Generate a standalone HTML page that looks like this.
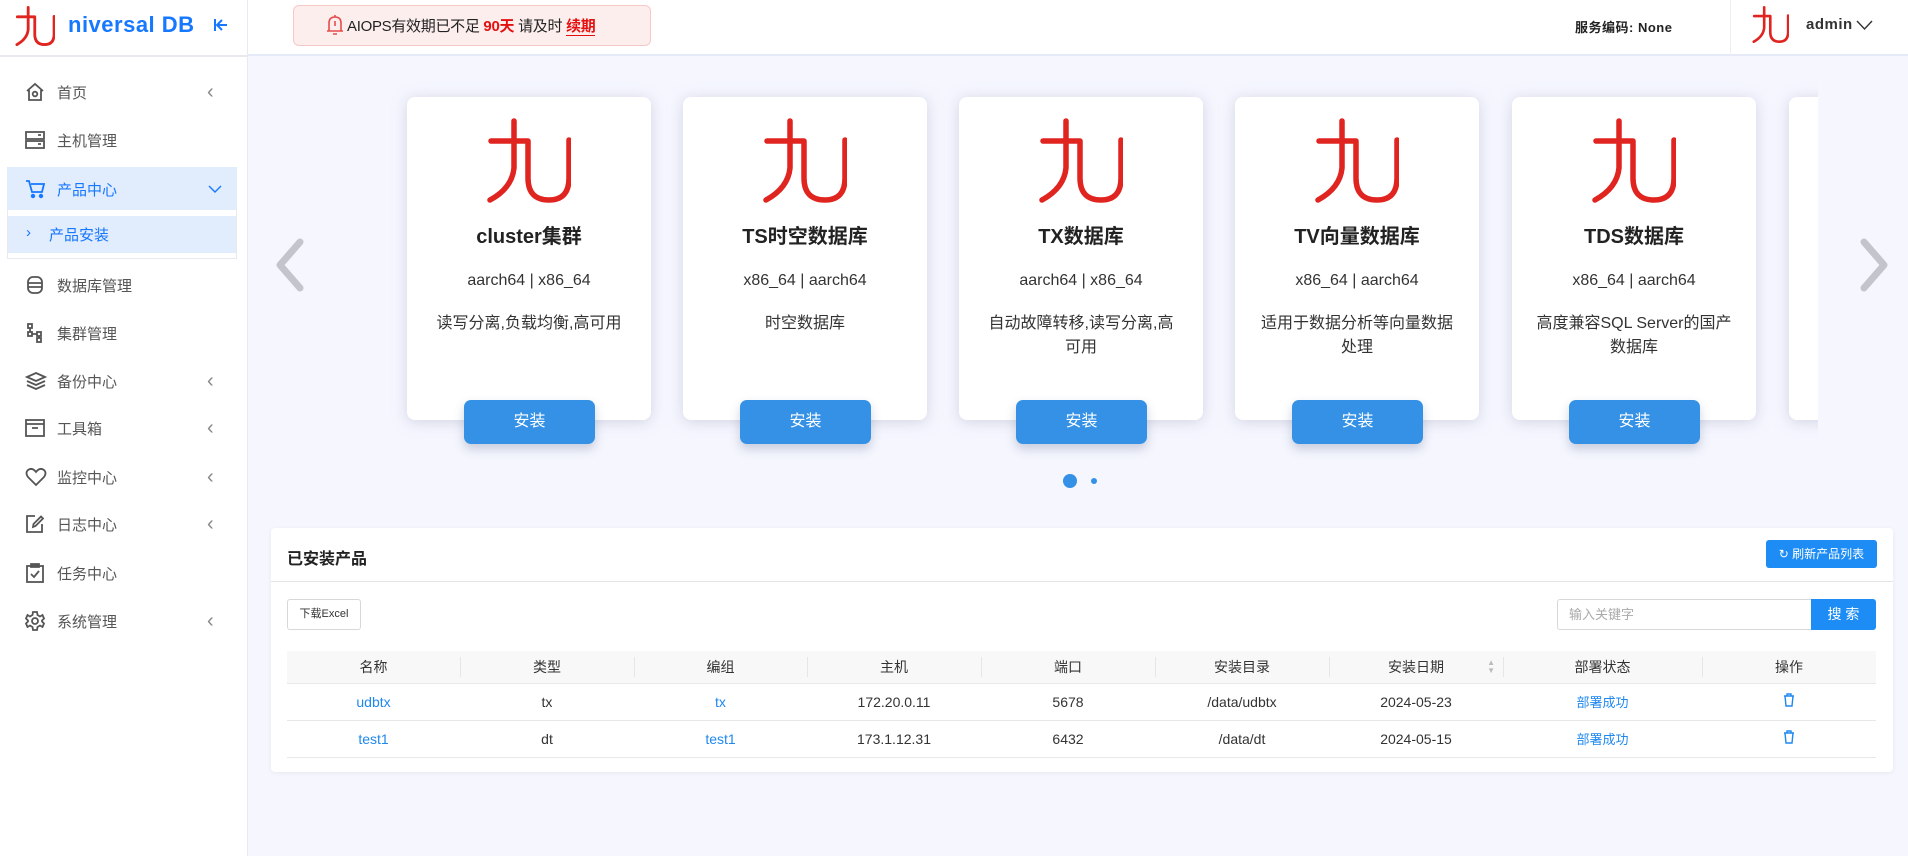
<!DOCTYPE html>
<html><head><meta charset="utf-8">
<style>
*{box-sizing:border-box;margin:0;padding:0}
body{width:1908px;height:856px;overflow:hidden;background:#f5f6fe;font-family:"Liberation Sans","Noto Sans CJK SC",sans-serif;color:#333;position:relative}
.abs{position:absolute}
#side{left:0;top:0;width:248px;height:856px;background:#fff;border-right:1px solid #e8eaf2}
#head{left:248px;top:0;width:1660px;height:56px;background:#fff;border-bottom:2px solid #e6e9f7}
.mi{position:absolute;left:0;width:248px;height:40px;display:flex;align-items:center;font-size:15px;color:#555}
.mi svg{position:absolute;left:25px}
.mi .t{position:absolute;left:57px}
.mi .ar{position:absolute;left:207px;font-size:20px;color:#888}
.card{position:absolute;top:97px;width:244px;height:323px;background:#fff;border-radius:8px;box-shadow:0 2px 14px rgba(180,184,205,.55);text-align:center}
.card .lg{position:absolute;left:79px;top:21px}
.card .tt{position:absolute;left:0;right:0;top:123px;font-size:20px;font-weight:bold;color:#222}
.card .ac{position:absolute;left:0;right:0;top:175px;font-size:16px;color:#333}
.card .ds{position:absolute;left:22px;right:22px;top:215px;font-size:16px;line-height:24px;color:#333}
.btn{position:absolute;top:303px;left:57px;width:131px;height:44px;background:#3491e6;border-radius:7px;color:#fff;font-size:16px;line-height:44px;box-shadow:0 5px 10px rgba(60,80,120,.25)}
table{border-collapse:collapse;position:absolute;left:287px;top:651px;width:1589px;font-size:14px}
th{height:32px;background:#f8f8f8;font-weight:normal;color:#333;position:relative}
td{height:37px;text-align:center;border-bottom:1px solid #e8e8e8;color:#333}
th{border-bottom:1px solid #e8e8e8}
th+th:before{content:"";position:absolute;left:0;top:6px;height:20px;border-left:1px solid #e6e6e6}
.bl{color:#1e88f0}
</style></head><body>

<div id="side" class="abs">
  <svg class="abs" style="left:15px;top:6px" width="40" height="40" viewBox="0 0 85 85"><g fill="none" stroke="#e02420" stroke-width="6" stroke-linecap="round"><path d="M28 3V50Q26 70 4 82M5 23H42M42 23V60Q42 82 63 82Q83 82 83 60V22"/></g></svg>
  <div class="abs" style="left:68px;top:12px;font-size:22px;font-weight:bold;color:#1677ff;letter-spacing:.5px">niversal DB</div>
  <svg class="abs" style="left:213px;top:17px" width="16" height="16" viewBox="0 0 16 16"><g stroke="#1677ff" stroke-width="2" fill="none"><path d="M2 2V14M14 8H5M9 3L4 8L9 13"/></g></svg>
  <div class="abs" style="left:0;top:55px;width:248px;border-top:2px solid #e8e8ee"></div>

  <div class="mi" style="top:72px"><svg width="20" height="20" viewBox="0 0 20 20"><g fill="none" stroke="#555" stroke-width="1.8"><path d="M2 9L10 2L18 9M4 8V18H16V8"/><circle cx="10" cy="12" r="2.3"/></g></svg><span class="t">首页</span><span class="ar">‹</span></div>
  <div class="mi" style="top:120px"><svg width="20" height="20" viewBox="0 0 20 20"><g fill="none" stroke="#555" stroke-width="1.8"><rect x="1" y="2" width="18" height="7"/><rect x="1" y="11" width="18" height="7"/><path d="M13 5H16M13 14H16"/></g></svg><span class="t">主机管理</span></div>
  <div class="abs" style="left:7px;top:167px;width:230px;height:43px;background:#e1ecfd"></div>
  <div class="mi" style="top:169px;color:#1677ff"><svg width="22" height="22" viewBox="0 0 22 22"><g fill="none" stroke="#1677ff" stroke-width="1.8"><path d="M1 3H4L7 14H17L19 6H6"/><circle cx="8" cy="18" r="1.3" fill="#1677ff"/><circle cx="16" cy="18" r="1.3" fill="#1677ff"/></g></svg><span class="t">产品中心</span><svg style="left:208px" width="14" height="10" viewBox="0 0 14 10"><path d="M1 2L7 8L13 2" stroke="#1677ff" fill="none" stroke-width="1.4"/></svg></div>
  <div class="abs" style="left:7px;top:210px;width:230px;height:49px;border:1px solid #e8e8ee;border-top:none"></div>
  <div class="abs" style="left:8px;top:216px;width:228px;height:37px;background:#e1ecfd"></div>
  <div class="abs" style="left:26px;top:224px;font-size:15px;color:#1677ff">›</div>
  <div class="abs" style="left:49px;top:224px;font-size:15px;color:#1677ff">产品安装</div>

  <div class="mi" style="top:265px"><svg width="20" height="20" viewBox="0 0 20 20"><g fill="none" stroke="#555" stroke-width="1.8"><rect x="3" y="2" width="14" height="16" rx="5"/><path d="M3 8H17M3 12H17"/></g></svg><span class="t">数据库管理</span></div>
  <div class="mi" style="top:313px"><svg width="20" height="20" viewBox="0 0 20 20"><g fill="none" stroke="#555" stroke-width="1.8"><rect x="3" y="1" width="4" height="4"/><rect x="3" y="9" width="4" height="4"/><rect x="12" y="15" width="4" height="4"/><rect x="12" y="9" width="4" height="4"/><path d="M5 5V9M7 11H12M14 13V15"/></g></svg><span class="t">集群管理</span></div>
  <div class="mi" style="top:361px"><svg width="22" height="20" viewBox="0 0 22 20"><g fill="none" stroke="#555" stroke-width="1.8"><path d="M11 2L20 6L11 10L2 6Z"/><path d="M2 10L11 14L20 10M2 14L11 18L20 14"/></g></svg><span class="t">备份中心</span><span class="ar">‹</span></div>
  <div class="mi" style="top:408px"><svg width="20" height="20" viewBox="0 0 20 20"><g fill="none" stroke="#555" stroke-width="1.8"><rect x="1" y="2" width="18" height="16"/><path d="M1 6H19M7 10H13"/></g></svg><span class="t">工具箱</span><span class="ar">‹</span></div>
  <div class="mi" style="top:457px"><svg width="22" height="20" viewBox="0 0 22 20"><path d="M11 18L3 10Q0 6 3 3Q7 0 11 5Q15 0 19 3Q22 6 19 10Z" fill="none" stroke="#555" stroke-width="1.8"/></svg><span class="t">监控中心</span><span class="ar">‹</span></div>
  <div class="mi" style="top:504px"><svg width="20" height="20" viewBox="0 0 20 20"><g fill="none" stroke="#555" stroke-width="1.8"><path d="M10 2H2V18H17V10"/><path d="M8 13L8.5 10L16 2.5L18 4.5L10.5 12Z"/></g></svg><span class="t">日志中心</span><span class="ar">‹</span></div>
  <div class="mi" style="top:553px"><svg width="20" height="20" viewBox="0 0 20 20"><g fill="none" stroke="#555" stroke-width="1.8"><rect x="2" y="3" width="16" height="16"/><path d="M6 1H14V4H6Z" fill="#555"/><path d="M6 11L9 14L14 8"/></g></svg><span class="t">任务中心</span></div>
  <div class="mi" style="top:601px"><svg width="20" height="20" viewBox="0 0 20 20"><g fill="none" stroke="#555" stroke-width="1.8"><path d="M8 1H12L12.5 4L15 5.5L17.5 4L19 7.5L17 9.5V10.5L19 12.5L17.5 16L15 14.5L12.5 16L12 19H8L7.5 16L5 14.5L2.5 16L1 12.5L3 10.5V9.5L1 7.5L2.5 4L5 5.5L7.5 4Z"/><circle cx="10" cy="10" r="3"/></g></svg><span class="t">系统管理</span><span class="ar">‹</span></div>
</div>

<div id="head" class="abs">
  <div class="abs" style="left:45px;top:5px;width:358px;height:41px;background:#fdeeee;border:1px solid #f8c8c8;border-radius:6px"></div>
  <svg class="abs" style="left:78px;top:14px" width="18" height="22" viewBox="0 0 18 22"><g fill="none" stroke="#e74c4c" stroke-width="1.6"><path d="M3 17V9Q3 3 9 3Q15 3 15 9V17ZM1 17H17M9 1V3M7 20H11M9 7V12"/></g></svg>
  <div class="abs" style="left:99px;top:15px;font-size:15px;color:#222;white-space:nowrap;letter-spacing:-.3px">AIOPS有效期已不足 <b style="color:#e41010">90天</b> 请及时 <b style="color:#e41010;border-bottom:1px solid #e41010">续期</b></div>
  <div class="abs" style="left:1327px;top:17px;font-size:13px;font-weight:bold;color:#222;letter-spacing:.5px">服务编码: None</div>
  <div class="abs" style="left:1482px;top:0;height:56px;border-left:1px solid #eee"></div>
  <svg class="abs" style="left:1504px;top:6px" width="37" height="37" viewBox="0 0 85 85"><g fill="none" stroke="#e02420" stroke-width="6" stroke-linecap="round"><path d="M28 3V50Q26 70 4 82M5 23H42M42 23V60Q42 82 63 82Q83 82 83 60V22"/></g></svg>
  <div class="abs" style="left:1558px;top:16px;font-size:15px;font-weight:bold;color:#333;letter-spacing:.5px">admin</div>
  <svg class="abs" style="left:1608px;top:20px" width="17" height="11" viewBox="0 0 17 11"><path d="M1 1L8.5 9L16 1" stroke="#333" fill="none" stroke-width="1.4"/></svg>
</div>

<div class="abs" style="left:270px;top:80px;width:1548px;height:390px;overflow:hidden">
  <div class="abs" style="left:0;top:0;width:1548px;height:390px">
    <div class="card" style="left:137px;top:17px"><svg class="lg" width="85" height="85" viewBox="0 0 85 85"><g fill="none" stroke="#e02420" stroke-width="5.5" stroke-linecap="round"><path d="M28 3V50Q26 70 4 82M5 23H42M42 23V60Q42 82 63 82Q83 82 83 60V22"/></g></svg><div class="tt">cluster集群</div><div class="ac">aarch64 | x86_64</div><div class="ds">读写分离,负载均衡,高可用</div><div class="btn">安装</div></div>
    <div class="card" style="left:413px;top:17px"><svg class="lg" width="85" height="85" viewBox="0 0 85 85"><g fill="none" stroke="#e02420" stroke-width="5.5" stroke-linecap="round"><path d="M28 3V50Q26 70 4 82M5 23H42M42 23V60Q42 82 63 82Q83 82 83 60V22"/></g></svg><div class="tt">TS时空数据库</div><div class="ac">x86_64 | aarch64</div><div class="ds">时空数据库</div><div class="btn">安装</div></div>
    <div class="card" style="left:689px;top:17px"><svg class="lg" width="85" height="85" viewBox="0 0 85 85"><g fill="none" stroke="#e02420" stroke-width="5.5" stroke-linecap="round"><path d="M28 3V50Q26 70 4 82M5 23H42M42 23V60Q42 82 63 82Q83 82 83 60V22"/></g></svg><div class="tt">TX数据库</div><div class="ac">aarch64 | x86_64</div><div class="ds">自动故障转移,读写分离,高可用</div><div class="btn">安装</div></div>
    <div class="card" style="left:965px;top:17px"><svg class="lg" width="85" height="85" viewBox="0 0 85 85"><g fill="none" stroke="#e02420" stroke-width="5.5" stroke-linecap="round"><path d="M28 3V50Q26 70 4 82M5 23H42M42 23V60Q42 82 63 82Q83 82 83 60V22"/></g></svg><div class="tt">TV向量数据库</div><div class="ac">x86_64 | aarch64</div><div class="ds">适用于数据分析等向量数据处理</div><div class="btn">安装</div></div>
    <div class="card" style="left:1242px;top:17px"><svg class="lg" width="85" height="85" viewBox="0 0 85 85"><g fill="none" stroke="#e02420" stroke-width="5.5" stroke-linecap="round"><path d="M28 3V50Q26 70 4 82M5 23H42M42 23V60Q42 82 63 82Q83 82 83 60V22"/></g></svg><div class="tt">TDS数据库</div><div class="ac">x86_64 | aarch64</div><div class="ds">高度兼容SQL Server的国产数据库</div><div class="btn">安装</div></div>
    <div class="card" style="left:1519px;top:17px"></div>
  </div>
</div>
<svg class="abs" style="left:274px;top:238px" width="32" height="54" viewBox="0 0 32 54"><path d="M26 4L6 27L26 50" stroke="#c4c4cc" stroke-width="7" fill="none" stroke-linecap="round" stroke-linejoin="round"/></svg>
<svg class="abs" style="left:1858px;top:238px" width="32" height="54" viewBox="0 0 32 54"><path d="M6 4L26 27L6 50" stroke="#c4c4cc" stroke-width="7" fill="none" stroke-linecap="round" stroke-linejoin="round"/></svg>
<div class="abs" style="left:1063px;top:474px;width:14px;height:14px;border-radius:50%;background:#3491e6"></div>
<div class="abs" style="left:1091px;top:478px;width:6px;height:6px;border-radius:50%;background:#3491e6"></div>

<div class="abs" style="left:271px;top:528px;width:1622px;height:244px;background:#fff;border-radius:4px;box-shadow:0 1px 4px rgba(0,0,0,.06)">
  <div class="abs" style="left:16px;top:17px;font-size:16px;font-weight:bold;color:#222">已安装产品</div>
  <div class="abs" style="left:0;top:53px;width:100%;border-top:1px solid #e4e4e4"></div>
  <div class="abs" style="left:1495px;top:12px;width:111px;height:28px;background:#1e8cf5;border-radius:3px;color:#fff;font-size:12px;line-height:28px;text-align:center">&#x21BB; 刷新产品列表</div>
  <div class="abs" style="left:16px;top:71px;width:74px;height:31px;border:1px solid #d8d8d8;border-radius:3px;font-size:11px;line-height:29px;text-align:center;color:#333">下载Excel</div>
  <div class="abs" style="left:1286px;top:71px;width:255px;height:31px;border:1px solid #d8d8d8;border-radius:3px 0 0 3px;font-size:13px;line-height:29px;padding-left:11px;color:#aaa">输入关键字</div>
  <div class="abs" style="left:1540px;top:71px;width:65px;height:31px;background:#1e8cf5;border-radius:0 3px 3px 0;font-size:14px;line-height:31px;text-align:center;color:#fff">搜 索</div>
</div>
<table>
<tr><th style="width:173px">名称</th><th style="width:174px">类型</th><th style="width:173px">编组</th><th style="width:174px">主机</th><th style="width:174px">端口</th><th style="width:174px">安装目录</th><th style="width:174px">安装日期<span style="position:absolute;right:8px;top:8px;font-size:8px;line-height:8px;color:#bbb">▲<br>▼</span></th><th style="width:199px">部署状态</th><th>操作</th></tr>
<tr><td class="bl">udbtx</td><td>tx</td><td class="bl">tx</td><td>172.20.0.11</td><td>5678</td><td>/data/udbtx</td><td>2024-05-23</td><td class="bl" style="font-size:13px">部署成功</td><td><svg width="12" height="14" viewBox="0 0 12 14"><g fill="none" stroke="#1e88f0" stroke-width="1.4"><path d="M1 3H11M4 3V1H8V3M2 3L3 13H9L10 3"/></g></svg></td></tr>
<tr><td class="bl">test1</td><td>dt</td><td class="bl">test1</td><td>173.1.12.31</td><td>6432</td><td>/data/dt</td><td>2024-05-15</td><td class="bl" style="font-size:13px">部署成功</td><td><svg width="12" height="14" viewBox="0 0 12 14"><g fill="none" stroke="#1e88f0" stroke-width="1.4"><path d="M1 3H11M4 3V1H8V3M2 3L3 13H9L10 3"/></g></svg></td></tr>
</table>
</body></html>
